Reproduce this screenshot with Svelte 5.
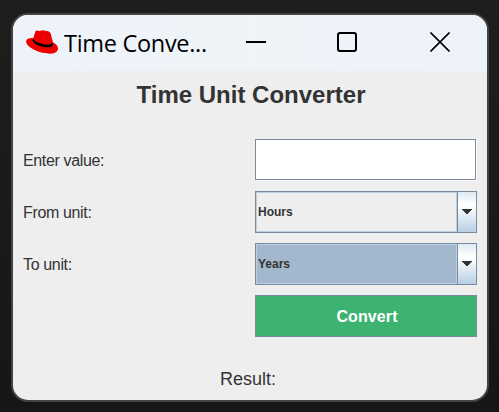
<script>
  let value = $state('');
  const units = [
    { label: 'From unit:', value: 'Hours', focused: false },
    { label: 'To unit:', value: 'Years', focused: true }
  ];
</script>

<div class="desktop">
  <section class="window">
    <header>
      <svg class="hat" width="32" height="25" viewBox="0 0 32 25">
        <path fill="#ee0000" d="M9.3 1.8C9.8.6 10.8.3 12 .8c1.4.6 2.6.2 4-.5 1-.5 2 .2 3.2.5 1 .3 1.8 0 3 .4 1.600.5 2.300 1.600 2.700 3l2 8c3 1.500 5.300 3.900 5.100 6.600-.3 3.700-4 5-8.200 4.900C15 23.600 1.700 18.500.2 12.300-.5 9.200 2.700 7.900 7.300 8z" />
        <path fill="#000" d="M7.400 8.800c1.300 3.100 8.500 5.900 14 5.800 2.700 0 4.800-.8 5.300-2.300l.3 2.700c-.9 1.900-3.500 2.500-6.500 2.300-6.600-.4-13.300-3.500-13.900-6.500-.1-.8.2-1.400.8-2z" />
      </svg>
      <span class="caption">Time Conve...</span>
      <div class="controls">
        <svg width="20" height="20" viewBox="0 0 20 20"><path d="M0 10H20" /></svg>
        <svg width="20" height="20" viewBox="0 0 20 20"><rect x="1" y="1" width="18" height="18" rx="2" /></svg>
        <svg width="20" height="20" viewBox="0 0 20 20"><path class="thin" d="M.5.5l19 19M19.5.5l-19 19" /></svg>
      </div>
    </header>
    <main>
      <h1>Time Unit Converter</h1>
      <div class="form">
        <label for="value">Enter value:</label>
        <input id="value" bind:value />
        {#each units as unit}
          <span class="label">{unit.label}</span>
          <div class="combo" class:focused={unit.focused}>
            <div class="choice">{unit.value}</div>
            <div class="arrow">
              <svg width="10" height="5" viewBox="0 0 10 5" shape-rendering="crispEdges"><path d="M0 0H10V1H9V2H8V3H7V4H6V5H4V4H3V3H2V2H1V1H0Z" /></svg>
            </div>
          </div>
        {/each}
        <span></span>
        <button>Convert</button>
      </div>
      <p>Result:</p>
    </main>
  </section>
</div>

<style>
  .desktop {
    box-sizing: border-box;
    width: 499px;
    height: 412px;
    padding: 13px 10px 10px 11px;
    background: linear-gradient(#1e1e1e, #161616);
    font-family: "Liberation Sans", Arial, sans-serif;
    color: #333;
  }
  .window {
    box-sizing: border-box;
    width: 478px;
    height: 389px;
    border: 2px solid #434343;
    border-radius: 17px;
    background: #eee;
    overflow: hidden;
  }
  header {
    box-sizing: border-box;
    display: flex;
    align-items: center;
    height: 56px;
    padding: 0 37px 0 13px;
    background: linear-gradient(90deg, #eef3fb, #eff4f8 50%, #eef2fb);
  }
  .hat {
    margin-top: -2px;
    flex: none;
  }
  .caption {
    margin-left: 6px;
    font: 23.5px "Open Sans", "Noto Sans", sans-serif;
    letter-spacing: -0.3px;
    color: #000;
    white-space: nowrap;
    margin-top: -1px;
  }
  .controls {
    display: flex;
    gap: 73px;
    margin: -2px 0 0 auto;
    width: 204px;
    flex: none;
  }
  .controls svg {
    flex: none;
    fill: none;
    stroke: #000;
    stroke-width: 2;
  }
  .controls svg:first-child {
    margin-right: -2px;
  }
  .controls .thin {
    stroke-width: 1.6;
  }
  h1 {
    margin: 0;
    padding: 10px 0 0 2px;
    height: 58px;
    font-size: 24px;
    line-height: 28px;
    text-align: center;
  }
  .form {
    display: grid;
    grid-template-columns: 222px 222px;
    grid-auto-rows: 42px;
    gap: 10px;
    padding: 0 10px;
  }
  label,
  .label {
    align-self: center;
    padding-top: 2px;
    font-size: 16px;
    line-height: 18px;
    letter-spacing: -0.35px;
    white-space: nowrap;
  }
  input {
    box-sizing: border-box;
    width: 221px;
    height: 41px;
    margin: 0;
    padding: 0 4px;
    border: 1px solid #7a8a99;
    border-radius: 0;
    background: #fff;
    box-shadow: 1px 1px #fff;
    outline: none;
    font: 16px "Liberation Sans", sans-serif;
  }
  .combo {
    box-sizing: border-box;
    display: flex;
    border: 1px solid #7a8a99;
  }
  .choice {
    flex: 1;
    display: flex;
    align-items: center;
    border: 1px solid #b8cfe5;
    padding-left: 1px;
    font-size: 12px;
    font-weight: bold;
  }
  .focused .choice {
    background: #a3b8cc;
  }
  .arrow {
    box-sizing: border-box;
    display: flex;
    align-items: center;
    justify-content: center;
    width: 19px;
    padding-bottom: 1px;
    border-left: 1px solid #7a8a99;
    background: linear-gradient(#dde8f3, #fff 30%, #fff 34%, #b8cfe5);
  }
  .arrow svg {
    fill: #333;
  }
  button {
    border: 1px solid #7a8a99;
    border-radius: 0;
    padding: 2px 0 0 2px;
    background: #3cb371;
    color: #fff;
    font: bold 16px "Liberation Sans", sans-serif;
    letter-spacing: 0.1px;
  }
  p {
    margin: 0;
    padding-top: 32px;
    text-align: center;
    font-size: 18px;
    line-height: 20px;
    margin-left: -4px;
  }
</style>
